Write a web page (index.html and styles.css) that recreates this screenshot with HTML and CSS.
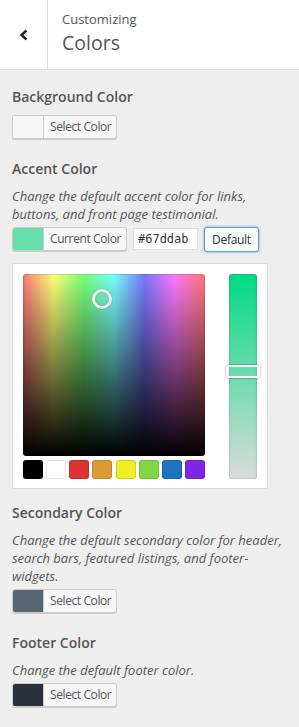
FILE: index.html
```html
<!DOCTYPE html>
<html>
<head>
    <meta charset="UTF-8">
    <title>Customizing Colors</title>
    <link rel="stylesheet" href="styles.css">
</head>
<body>
    <div class="header">
        <button class="back" type="button" aria-label="Back">
            <svg width="10" height="12" viewBox="0 0 10 12"><polyline points="7.5,1.5 2.5,6 7.5,10.5" fill="none" stroke="#222" stroke-width="2.4"/></svg>
        </button>
        <div class="title">
            <span class="sub">Customizing</span>
            <span class="main">Colors</span>
        </div>
    </div>

    <div class="control first">
        <h3>Background Color</h3>
        <button class="color-btn" type="button">
            <span class="swatch" style="background:#f7f7f7"></span>
            <span class="label">Select Color</span>
        </button>
    </div>

    <div class="control">
        <h3>Accent Color</h3>
        <p class="desc">Change the default accent color for links, buttons, and front page testimonial.</p>
        <div class="row">
            <button class="color-btn" type="button">
                <span class="swatch" style="background:#67ddab"></span>
                <span class="label">Current Color</span>
            </button>
            <input class="hex" type="text" value="#67ddab">
            <button class="default" type="button">Default</button>
        </div>
        <div class="picker">
            <div class="left">
                <div class="square">
                    <span class="ring"></span>
                </div>
                <div class="palette">
                    <span style="background:#000000"></span>
                    <span style="background:#ffffff"></span>
                    <span style="background:#dd3333"></span>
                    <span style="background:#dd9933"></span>
                    <span style="background:#eeee22"></span>
                    <span style="background:#81d742"></span>
                    <span style="background:#1e73be"></span>
                    <span style="background:#8224e3"></span>
                </div>
            </div>
            <div class="strip">
                <span class="handle"></span>
            </div>
        </div>
    </div>

    <div class="control">
        <h3>Secondary Color</h3>
        <p class="desc">Change the default secondary color for header, search bars, featured listings, and footer-widgets.</p>
        <button class="color-btn" type="button">
            <span class="swatch" style="background:#566474"></span>
            <span class="label">Select Color</span>
        </button>
    </div>

    <div class="control">
        <h3>Footer Color</h3>
        <p class="desc">Change the default footer color.</p>
        <button class="color-btn" type="button">
            <span class="swatch" style="background:#2b313a"></span>
            <span class="label">Select Color</span>
        </button>
    </div>
</body>
</html>
```

FILE: styles.css
```css
body {
    margin: 0;
    background: #eeeeee;
    font-family: "Open Sans", sans-serif;
    color: #555;
    font-size: 13px;
}
.header {
    display: flex;
    height: 69px;
    background: #fff;
    border-bottom: 1px solid #ddd;
}
.back {
    width: 48px;
    padding: 0;
    border: none;
    border-right: 1px solid #ddd;
    background: #fff;
    display: flex;
    align-items: center;
    justify-content: center;
}
.title {
    display: flex;
    flex-direction: column;
    padding: 10px 0 0 14px;
}
.title .sub {
    font-size: 13px;
    line-height: 18px;
    color: #555;
}
.title .main {
    font-size: 19.5px;
    line-height: 30px;
    color: #555;
}
.control {
    padding: 0 12px;
    margin-top: 14px;
}
.control.first {
    margin-top: 17px;
}
h3 {
    margin: 0 0 8px;
    font-size: 14px;
    line-height: 20px;
    font-weight: 600;
    color: #555;
}
.desc {
    margin: 0 0 4px;
    font-style: italic;
    line-height: 18px;
}
.color-btn {
    display: inline-flex;
    height: 24px;
    margin-bottom: 6px;
    padding: 0;
    border: 1px solid #ccc;
    border-radius: 3px;
    background: #f7f7f7;
    box-shadow: 0 1px 0 #ccc;
    overflow: hidden;
    font-family: inherit;
    font-size: 12px;
    letter-spacing: -0.4px;
    color: #555;
    vertical-align: top;
}
.color-btn .swatch {
    width: 30px;
    border-right: 1px solid #ccc;
}
.color-btn .label {
    padding: 0 5px 0 6px;
    line-height: 22px;
}
.row {
    display: flex;
    align-items: flex-start;
    gap: 6px;
}
.row .color-btn {
    margin-bottom: 0;
}
.hex {
    box-sizing: border-box;
    width: 65px;
    height: 22px;
    margin-top: 1px;
    padding: 0 4px;
    border: 1px solid #ddd;
    background: #fff;
    font-family: "DejaVu Sans Mono", monospace;
    font-size: 12px;
    color: #333;
}
.default {
    width: 55px;
    height: 25px;
    padding: 0;
    border: 1px solid #5b9dd9;
    border-radius: 3px;
    background: #fafafa;
    box-shadow: 0 0 3px rgba(0, 115, 170, 0.6);
    font-family: inherit;
    font-size: 12px;
    letter-spacing: -0.3px;
    color: #333;
}
.picker {
    display: flex;
    gap: 24px;
    width: 234px;
    margin-top: 11px;
    padding: 10px 10px 9px;
    background: #fff;
    border: 1px solid #ddd;
}
.left {
    display: flex;
    flex-direction: column;
    gap: 4px;
}
.square {
    position: relative;
    width: 182px;
    height: 182px;
    border-radius: 3px;
    background:
        linear-gradient(to bottom, rgba(0, 0, 0, 0), #000),
        linear-gradient(to right, #ff7878, #ffff78 16.6%, #78ff78 33.3%, #78ffff 50%, #7878ff 66.6%, #ff78ff 83.3%, #ff7878);
    box-shadow: inset 0 0 2px rgba(0, 0, 0, 0.4);
}
.ring {
    position: absolute;
    left: 69px;
    top: 15px;
    width: 14px;
    height: 14px;
    border: 3px solid #eee;
    border-radius: 50%;
    box-shadow: 0 0 1px rgba(0, 0, 0, 0.5), inset 0 0 1px rgba(0, 0, 0, 0.5);
}
.palette {
    display: flex;
    justify-content: space-between;
}
.palette span {
    width: 20px;
    height: 19px;
    border-radius: 3px;
    box-shadow: inset 0 0 0 1px rgba(0, 0, 0, 0.12);
}
.strip {
    position: relative;
    width: 28px;
    height: 205px;
    border-radius: 3px;
    background: linear-gradient(to bottom, #00da84, #dadcdb);
    box-shadow: inset 0 0 2px rgba(0, 0, 0, 0.35);
}
.handle {
    position: absolute;
    left: -3px;
    top: 91px;
    box-sizing: border-box;
    width: 34px;
    height: 13px;
    border: 2px solid #fff;
    border-radius: 3px;
    box-shadow: 0 0 2px rgba(0, 0, 0, 0.6);
}
```
